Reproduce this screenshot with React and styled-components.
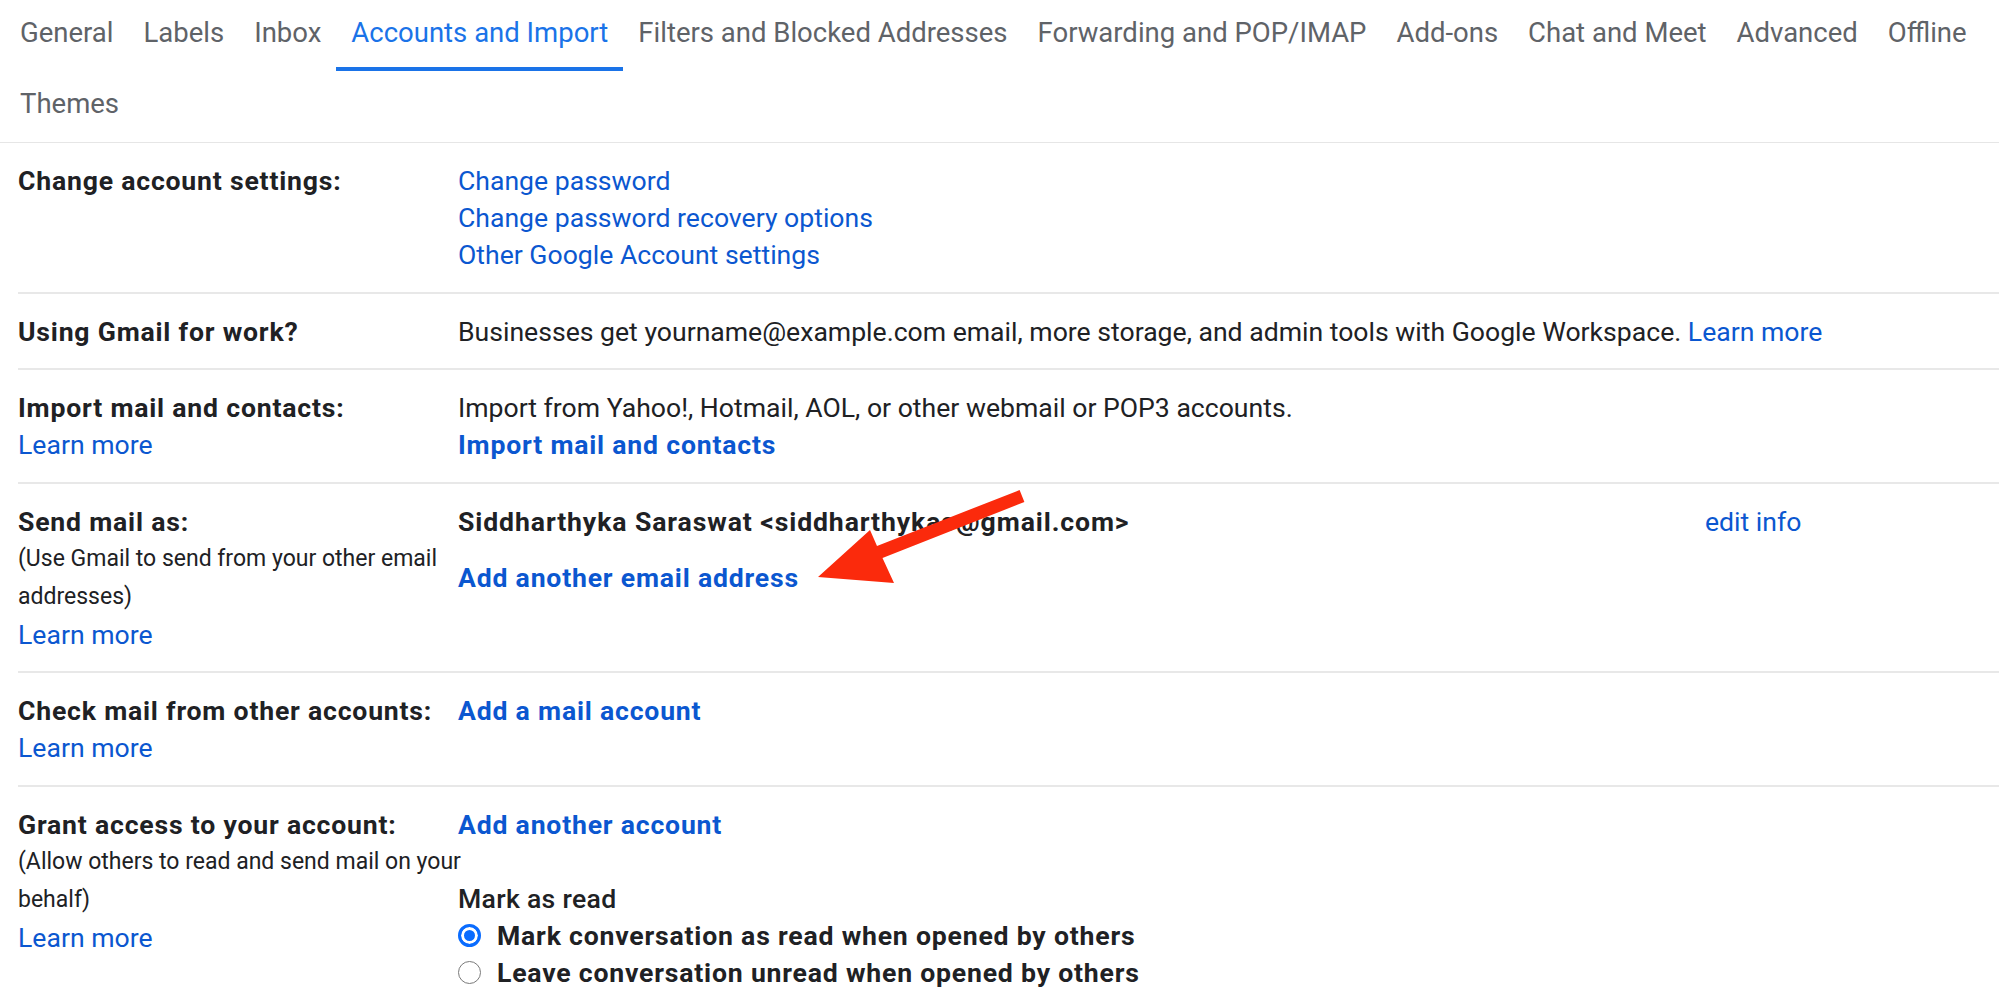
import styled, { createGlobalStyle } from "styled-components";

const GlobalStyle = createGlobalStyle`
  body {
    margin: 0;
    background: #ffffff;
    font-family: Roboto, "Liberation Sans", Arial, sans-serif;
    font-size: 26.6px;
    color: #202124;
  }
`;

const tabs = [
  "General",
  "Labels",
  "Inbox",
  "Accounts and Import",
  "Filters and Blocked Addresses",
  "Forwarding and POP/IMAP",
  "Add-ons",
  "Chat and Meet",
  "Advanced",
  "Offline",
];

const App = () => {
  return (
    <Page>
      <GlobalStyle />
      <TabBar>
        {tabs.map((name) => (
          <Tab key={name} $active={name === "Accounts and Import"}>
            {name}
          </Tab>
        ))}
        <RowBreak />
        <Tab>Themes</Tab>
      </TabBar>

      <Settings>
        {/* change account settings */}
        <Row>
          <Label>Change account settings:</Label>
          <Value>
            <Link>Change password</Link>
            <Link>Change password recovery options</Link>
            <Link>Other Google Account settings</Link>
          </Value>
        </Row>

        {/* workspace */}
        <Row>
          <Label>Using Gmail for work?</Label>
          <Value>
            <Text>
              Businesses get yourname@example.com email, more storage, and
              admin tools with Google Workspace. <InlineLink>Learn more</InlineLink>
            </Text>
          </Value>
        </Row>

        {/* import */}
        <Row>
          <Label>
            Import mail and contacts:
            <Link>Learn more</Link>
          </Label>
          <Value>
            <Text>Import from Yahoo!, Hotmail, AOL, or other webmail or POP3 accounts.</Text>
            <Link $bold>Import mail and contacts</Link>
          </Value>
        </Row>

        {/* send mail as */}
        <Row>
          <Label>
            Send mail as:
            <Hint>
              (Use Gmail to send from your other email
              <br />
              addresses)
            </Hint>
            <Link>Learn more</Link>
          </Label>
          <Value>
            <SendAsLine>
              <Strong>Siddharthyka Saraswat &lt;siddharthykas@gmail.com&gt;</Strong>
              <Link>edit info</Link>
            </SendAsLine>
            <Link $bold $spaced>
              Add another email address
            </Link>
          </Value>
        </Row>

        {/* check mail */}
        <Row>
          <Label>
            Check mail from other accounts:
            <Link>Learn more</Link>
          </Label>
          <Value>
            <Link $bold>Add a mail account</Link>
          </Value>
        </Row>

        {/* grant access */}
        <Row>
          <Label>
            Grant access to your account:
            <Hint>
              (Allow others to read and send mail on your
              <br />
              behalf)
            </Hint>
            <Link>Learn more</Link>
          </Label>
          <Value>
            <Link $bold>Add another account</Link>
            <GroupTitle>Mark as read</GroupTitle>
            <Option>
              <Radio $checked />
              Mark conversation as read when opened by others
            </Option>
            <Option>
              <Radio />
              Leave conversation unread when opened by others
            </Option>
          </Value>
        </Row>
      </Settings>

      <Arrow viewBox="0 0 1999 988" width="1999" height="988">
        <polygon
          fill="#fb2a0c"
          points="818,577 870,530 877,546 1019.6,490 1024.4,502 882.5,558 894,583"
        />
      </Arrow>
    </Page>
  );
};

const Page = styled.div`
  position: relative;
  width: 1999px;
  height: 988px;
  overflow: hidden;
`;

const TabBar = styled.nav`
  display: flex;
  flex-wrap: wrap;
  padding-left: 5px;
  border-bottom: 1px solid #e6e6e6;
`;

const RowBreak = styled.div`
  flex-basis: 100%;
  height: 0;
`;

const Tab = styled.div`
  box-sizing: border-box;
  height: 71px;
  padding: 14px 15px 0;
  font-size: 27.5px;
  line-height: 37px;
  white-space: nowrap;
  color: ${(p) => (p.$active ? "#1a73e8" : "#5f6368")};
  border-bottom: 4px solid ${(p) => (p.$active ? "#1a73e8" : "transparent")};
  cursor: pointer;
`;

const Settings = styled.section`
  margin-left: 18px;
`;

const Row = styled.div`
  display: grid;
  grid-template-columns: 440px 1fr;
  padding: 19px 0 18.5px;
  border-bottom: 2px solid #e8e8e8;
  line-height: 37px;
`;

const Label = styled.div`
  display: flex;
  flex-direction: column;
  align-items: flex-start;
  font-weight: 700;
  letter-spacing: 0.8px;
  color: #202124;
  white-space: nowrap;
`;

const Hint = styled.span`
  font-size: 23px;
  font-weight: 400;
  letter-spacing: 0;
  line-height: 38px;
  color: #202124;
`;

const Value = styled.div`
  display: flex;
  flex-direction: column;
  align-items: flex-start;
  white-space: nowrap;
`;

const Text = styled.span`
  color: #202124;
`;

const Link = styled.a`
  color: #0b57d0;
  font-weight: ${(p) => (p.$bold ? 700 : 400)};
  letter-spacing: ${(p) => (p.$bold ? "0.8px" : "0")};
  margin-top: ${(p) => (p.$spaced ? "19px" : "0")};
  cursor: pointer;
`;

const InlineLink = styled.a`
  color: #0b57d0;
  cursor: pointer;
`;

const SendAsLine = styled.div`
  display: grid;
  grid-template-columns: 1247px auto;
`;

const Strong = styled.span`
  font-weight: 700;
  letter-spacing: 0.9px;
  color: #202124;
`;

const GroupTitle = styled.div`
  margin-top: 37px;
  font-weight: 500;
  letter-spacing: 0.3px;
  color: #202124;
`;

const Option = styled.label`
  display: flex;
  align-items: center;
  gap: 16px;
  font-weight: 700;
  letter-spacing: 0.8px;
  color: #202124;
`;

const Radio = styled.span`
  box-sizing: border-box;
  width: 23px;
  height: 23px;
  border-radius: 50%;
  flex-shrink: 0;
  background: ${(p) => (p.$checked ? "#0a6cff" : "#ffffff")};
  border: ${(p) => (p.$checked ? "3px solid #0a6cff" : "1.5px solid #7a7a7a")};
  box-shadow: ${(p) => (p.$checked ? "inset 0 0 0 3px #ffffff" : "none")};
`;

const Arrow = styled.svg`
  position: absolute;
  top: 0;
  left: 0;
  pointer-events: none;
`;

export default App;
